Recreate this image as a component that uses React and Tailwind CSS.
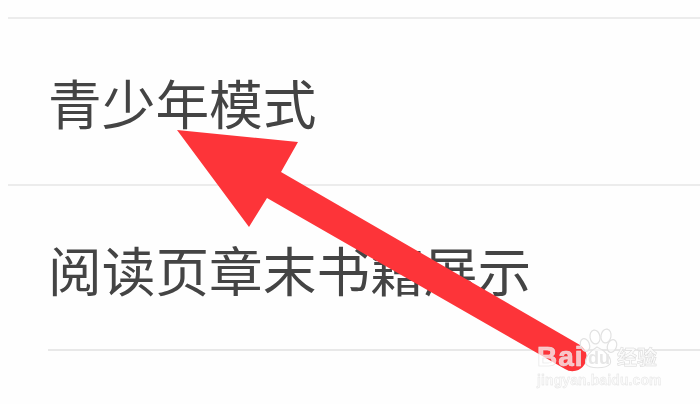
export default function App() {
  const rowText = "text-[53.7px] leading-none text-[#444444] [font-family:'Noto_Sans_CJK_SC','Noto_Sans_CJK_JP',sans-serif] blur-[0.4px] whitespace-nowrap";
  return (
    <div className="relative w-[700px] h-[404px] overflow-hidden bg-[#fefefe]">
      <div className="flex flex-col pt-[17px]">
        <div className="ml-2 h-[2px] bg-[#ececec]" />
        <div className="flex items-center h-[165px] pl-[48px]">
          <span className={rowText}>青少年模式</span>
        </div>
        <div className="ml-2 h-[2px] bg-[#ececec]" />
        <div className="flex items-center h-[163px] pl-[48px] pt-[2px]">
          <span className={rowText}>阅读页章末书籍展示</span>
        </div>
        <div className="ml-12 h-[2px] bg-[#e8e8e8]" />
      </div>

      <svg className="absolute inset-0 blur-[0.3px]" width="700" height="404" viewBox="0 0 700 404">
        <path d="M177 130 L298 142 L281 172 L580 345 A14 14 0 0 1 565 369 L267 198 L249 227 Z" fill="#fd3439" />
        <g fill="#ffffff" fillOpacity="0.6" stroke="#e2e2e2" strokeWidth="1.2">
          <ellipse cx="595" cy="337" rx="5" ry="7" transform="rotate(-10 595 337)" />
          <ellipse cx="606" cy="336" rx="5" ry="7" transform="rotate(10 606 336)" />
          <ellipse cx="612" cy="346" rx="4.5" ry="6.5" transform="rotate(20 612 346)" />
          <ellipse cx="585" cy="345" rx="4.5" ry="6.5" transform="rotate(-20 585 345)" />
          <path d="M597 347 C590 351 584 358 586 364 C589 369 606 369 610 364 C613 358 604 350 597 347 Z" />
        </g>
      </svg>

      <div className="absolute left-[537px] top-[342px] w-[163px] h-[50px] [font-family:'Liberation_Sans',sans-serif] blur-[0.5px]">
        <div className="flex items-center h-[29px]">
          <span className="w-[50px] text-[28px] leading-none font-bold tracking-[1px] text-white/70 [-webkit-text-stroke:0.6px_#e4e4e4]">Bai</span>
          <span className="w-[29px] ml-[1px] pt-[3px] text-[18px] leading-none font-bold text-[#e6e6e6]">du</span>
          <span className="text-[20px] leading-none font-bold text-[#fafafa] [font-family:'Noto_Sans_CJK_SC',sans-serif] [-webkit-text-stroke:0.5px_#d8d8d8]">经验</span>
        </div>
        <div className="mt-[2px] text-[14px] leading-none font-bold tracking-[0.1px] text-[#fafafa] [-webkit-text-stroke:0.4px_#e2e2e2] whitespace-nowrap">jingyan.baidu.com</div>
      </div>
    </div>
  );
}
